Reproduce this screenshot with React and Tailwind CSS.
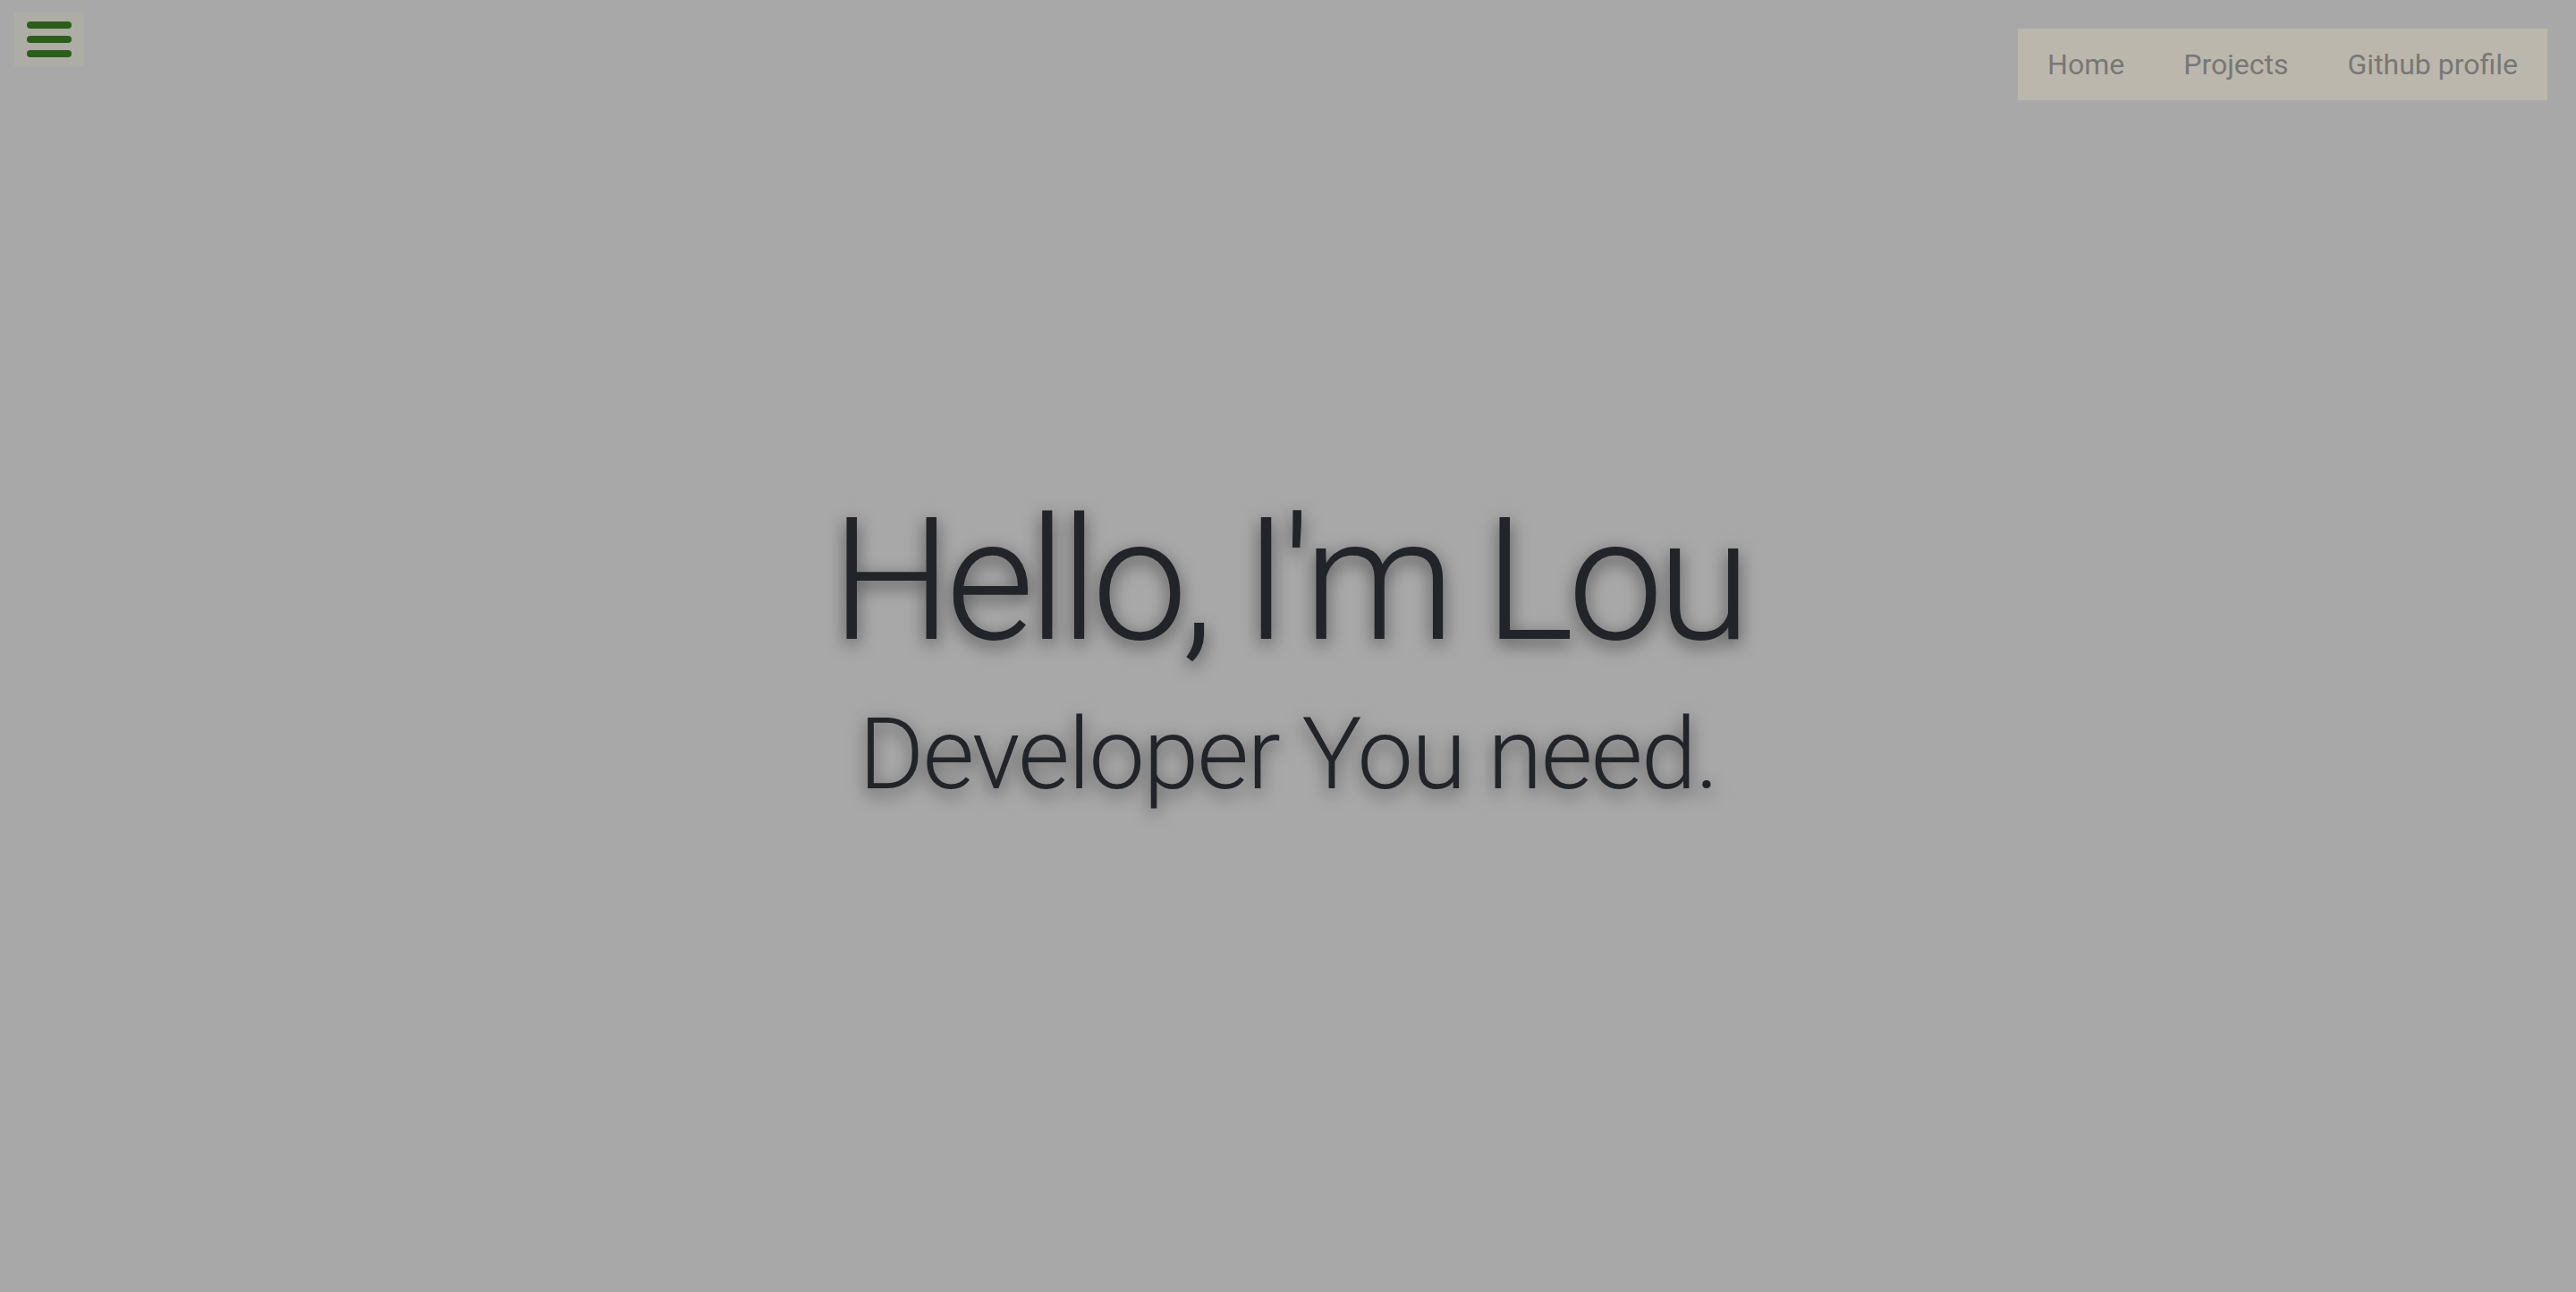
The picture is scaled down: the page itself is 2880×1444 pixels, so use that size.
import React from "react";

const navLinks = ["Home", "Projects", "Github profile"];

const App = () => {
  return (
    <div
      className="relative min-h-screen bg-[#a8a8a8] flex flex-col items-center justify-center"
      style={{ fontFamily: "Roboto, 'Liberation Sans', sans-serif" }}
    >
      {/* Menu toggle */}
      <button className="absolute top-[14px] left-[16px] w-[78px] h-[60px] bg-[#adada6] flex flex-col items-center justify-center gap-[8px]">
        <span className="block w-[50px] h-[8px] rounded-full bg-[#2b5e1b]"></span>
        <span className="block w-[50px] h-[8px] rounded-full bg-[#2b5e1b]"></span>
        <span className="block w-[50px] h-[8px] rounded-full bg-[#2b5e1b]"></span>
      </button>

      {/* Nav */}
      <nav className="absolute top-[32px] right-[32px] h-[80px] bg-[#bcb7ac] flex items-center">
        {navLinks.map((link) => (
          <a
            key={link}
            href="#"
            className="px-[33px] text-[32px] text-[#777777] leading-none"
          >
            {link}
          </a>
        ))}
      </nav>

      {/* Hero */}
      <div className="flex flex-col items-center text-[#212529] font-light">
        <h1 className="mt-[8px] text-[191px] leading-none tracking-[-0.037em] [text-shadow:0_6px_20px_rgba(0,0,0,0.55)]">
          Hello, I'm Lou
        </h1>
        <h2 className="mt-[42px] text-[112px] leading-none tracking-[-0.017em] [text-shadow:0_6px_20px_rgba(0,0,0,0.55)]">
          Developer You need.
        </h2>
      </div>
    </div>
  );
};

export default App;
